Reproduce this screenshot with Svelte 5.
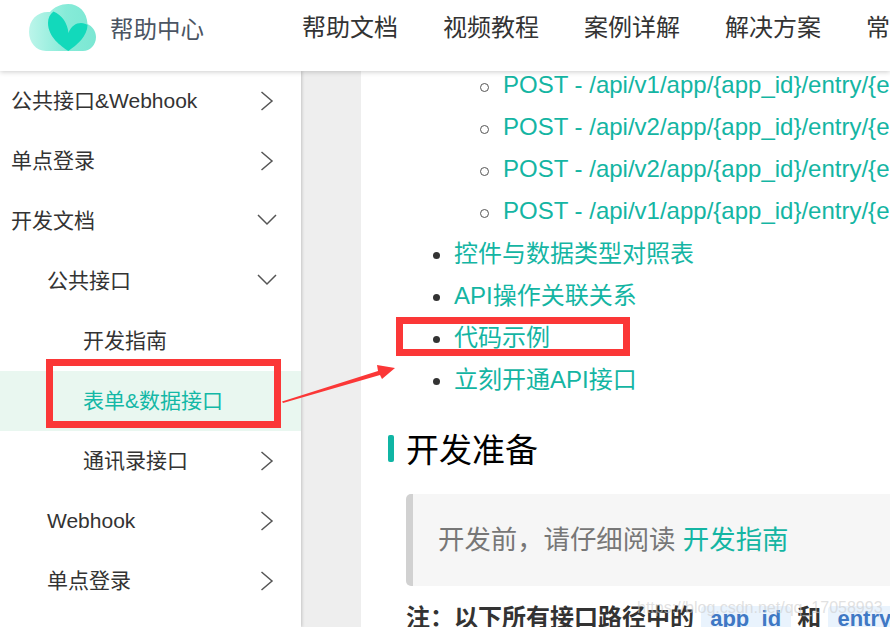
<script>
	const nav = ['帮助文档', '视频教程', '案例详解', '解决方案', '常见问题'];

	const menu = [
		{ label: '公共接口&Webhook', level: 0, arrow: 'right' },
		{ label: '单点登录', level: 0, arrow: 'right' },
		{ label: '开发文档', level: 0, arrow: 'down' },
		{ label: '公共接口', level: 1, arrow: 'down' },
		{ label: '开发指南', level: 2 },
		{ label: '表单&数据接口', level: 2, active: true },
		{ label: '通讯录接口', level: 2, arrow: 'right' },
		{ label: 'Webhook', level: 1, arrow: 'right' },
		{ label: '单点登录', level: 1, arrow: 'right' }
	];

	const apis = [
		'POST - /api/v1/app/{app_id}/entry/{entry_id}/data_update',
		'POST - /api/v2/app/{app_id}/entry/{entry_id}/data_create',
		'POST - /api/v2/app/{app_id}/entry/{entry_id}/data_update',
		'POST - /api/v1/app/{app_id}/entry/{entry_id}/data_delete'
	];

	const links = ['控件与数据类型对照表', 'API操作关联关系', '代码示例', '立刻开通API接口'];
</script>

<div class="page">
	<header class="topbar">
		<div class="brand">
			<svg class="logo" width="68" height="48" viewBox="0 0 68 48">
				<defs>
					<linearGradient id="cloud" x1="0" y1="0" x2="1" y2="0">
						<stop offset="0" stop-color="#bcf5ea" />
						<stop offset="0.55" stop-color="#86ebd8" />
						<stop offset="1" stop-color="#7be7d3" />
					</linearGradient>
				</defs>
				<path
					fill="url(#cloud)"
					d="M17 47C7 47 0 38 0 28C0 16 8 8 19 8L21 8C25 3 32 0 39 0C50 0 58 8 58.500 20C63 22 67 27 67 33C67 41 61 47 54 47Z"
				/>
				<path
					fill="#12d9bb"
					d="M39.300 47C32 42 19 33 19 19C19 14 21 10 24.500 7.500C33 11 38.500 19 39.500 29C42 22 47 19 52 19C55 19 57 20 58.500 21C58.500 32 48 41 39.300 47Z"
				/>
			</svg>
			<span class="brand-name">帮助中心</span>
		</div>
		<nav class="nav">
			{#each nav as item}
				<span class="nav-item">{item}</span>
			{/each}
		</nav>
	</header>

	<div class="body">
		<aside class="sidebar">
			{#each menu as item}
				<div class="menu-row level-{item.level}" class:active={item.active}>
					<span>{item.label}</span>
					{#if item.arrow === 'right'}
						<svg class="chevron" width="14" height="20" viewBox="0 0 14 20">
							<path d="M1.500 1L12 10L1.500 19" />
						</svg>
					{:else if item.arrow === 'down'}
						<svg class="chevron down" width="20" height="14" viewBox="0 0 20 14">
							<path d="M1 1L10 10L19 1" />
						</svg>
					{/if}
				</div>
			{/each}
		</aside>

		<div class="gutter"></div>

		<main class="content">
			<ul class="links">
				<li class="nested">
					<ul class="apis">
						{#each apis as api}
							<li><span class="link">{api}</span></li>
						{/each}
					</ul>
				</li>
				{#each links as link}
					<li><span class="link">{link}</span></li>
				{/each}
			</ul>

			<h2 class="title">开发准备</h2>

			<blockquote class="quote">
				开发前，请仔细阅读 <span class="link">开发指南</span>
			</blockquote>

			<p class="note">
				注：以下所有接口路径中的 <code>app_id</code> 和 <code>entry_id</code>
			</p>
		</main>
	</div>

	<!-- annotations drawn over the screenshot -->
	<div class="mark mark-menu"></div>
	<div class="mark mark-link"></div>
	<svg class="arrow" width="120" height="44" viewBox="0 0 120 44">
		<path fill="#fb3737" d="M0 41.500L96 11L95 5L113 8L100 19L98 15L1 43Z" />
	</svg>
	<div class="watermark">https://blog.csdn.net/qq_17058993</div>
</div>

<style>
	:global(body) {
		margin: 0;
		background: #fff;
	}

	.page {
		position: relative;
		width: 890px;
		height: 627px;
		overflow: hidden;
		font-family: 'Liberation Sans', 'Noto Sans CJK SC', sans-serif;
		color: #333;
	}

	.topbar {
		position: relative;
		z-index: 2;
		display: flex;
		align-items: center;
		box-sizing: border-box;
		height: 71px;
		padding-bottom: 20px;
		background: #fff;
		box-shadow: 0 1px 5px rgba(0, 0, 0, 0.2);
	}

	.brand {
		display: flex;
		align-items: center;
		width: 302px;
		flex: none;
		padding-left: 29px;
		box-sizing: border-box;
	}

	.logo {
		flex: none;
		margin-top: 5px;
	}

	.brand-name {
		margin-left: 13px;
		margin-top: 5px;
		font-size: 23.500px;
		color: #4b5563;
	}

	.nav {
		display: flex;
		gap: 45px;
		white-space: nowrap;
	}

	.nav-item {
		font-size: 24px;
		color: #333;
	}

	.body {
		display: flex;
		height: 556px;
	}

	.sidebar {
		width: 301px;
		flex: none;
		background: #fff;
		box-shadow: 1px 0 3px rgba(0, 0, 0, 0.18);
		position: relative;
		z-index: 1;
	}

	.menu-row {
		display: flex;
		align-items: center;
		justify-content: space-between;
		height: 60px;
		padding-right: 24px;
		font-size: 21px;
		line-height: 26px;
		color: #333;
	}

	.level-0 {
		padding-left: 11px;
	}

	.level-1 {
		padding-left: 47px;
	}

	.level-2 {
		padding-left: 83px;
	}

	.menu-row.active {
		background: #e9f7f0;
		color: #14b8a6;
	}

	.chevron {
		flex: none;
		fill: none;
		stroke: #555;
		stroke-width: 1.500;
		margin-right: 3px;
	}

	.chevron.down {
		margin-right: 0;
	}

	.gutter {
		width: 60px;
		flex: none;
		background: #eee;
	}

	.content {
		flex: 1;
		min-width: 0;
		margin-top: -7px;
		white-space: nowrap;
		overflow: hidden;
		background: #fff;
	}

	.links {
		margin: 0;
		padding-left: 93px;
		list-style: disc;
		font-size: 24px;
		line-height: 42px;
		color: #333;
	}

	.nested {
		list-style: none;
		margin-bottom: 1px;
	}

	.apis {
		margin: 0;
		padding-left: 49px;
		list-style: none;
	}

	.apis li {
		position: relative;
	}

	.apis li::before {
		content: '';
		position: absolute;
		left: -23px;
		top: 19px;
		box-sizing: border-box;
		width: 9px;
		height: 9px;
		border: 1.500px solid #555;
		border-radius: 50%;
	}

	.link {
		color: #14b5a3;
	}

	.title {
		display: flex;
		align-items: center;
		margin: 25px 0 0 27px;
		height: 44px;
		font-size: 33px;
		font-weight: 400;
		color: #000;
	}

	.title::before {
		content: '';
		width: 6px;
		height: 27px;
		margin-right: 12px;
		border-radius: 2px;
		background: #10b5a4;
	}

	.quote {
		margin: 24px 0 0 45px;
		height: 92px;
		line-height: 92px;
		padding-left: 25px;
		border-left: 7px solid #d1d1d1;
		border-radius: 5px 0 0 5px;
		background: #f6f6f6;
		font-size: 26.400px;
		color: #777;
	}

	.note {
		margin: 15px 0 0 45px;
		font-size: 24px;
		line-height: 34px;
		font-weight: 700;
		color: #333;
	}

	code {
		padding: 0 9.500px;
		border-radius: 4px;
		background: #e9f3fd;
		color: #3f78c4;
		font-family: 'Liberation Sans', sans-serif;
		font-size: 22px;
	}

	.mark {
		position: absolute;
		box-sizing: border-box;
		border: 7px solid #fb3737;
		z-index: 3;
	}

	.mark-menu {
		left: 46px;
		top: 359px;
		width: 235px;
		height: 69px;
	}

	.mark-link {
		left: 396px;
		top: 317px;
		width: 234px;
		height: 39px;
	}

	.arrow {
		position: absolute;
		left: 282px;
		top: 360px;
		z-index: 3;
	}

	.watermark {
		position: absolute;
		z-index: 3;
		left: 637px;
		top: 599px;
		font-size: 16px;
		white-space: nowrap;
		color: rgba(205, 205, 205, 0.6);
	}
</style>
